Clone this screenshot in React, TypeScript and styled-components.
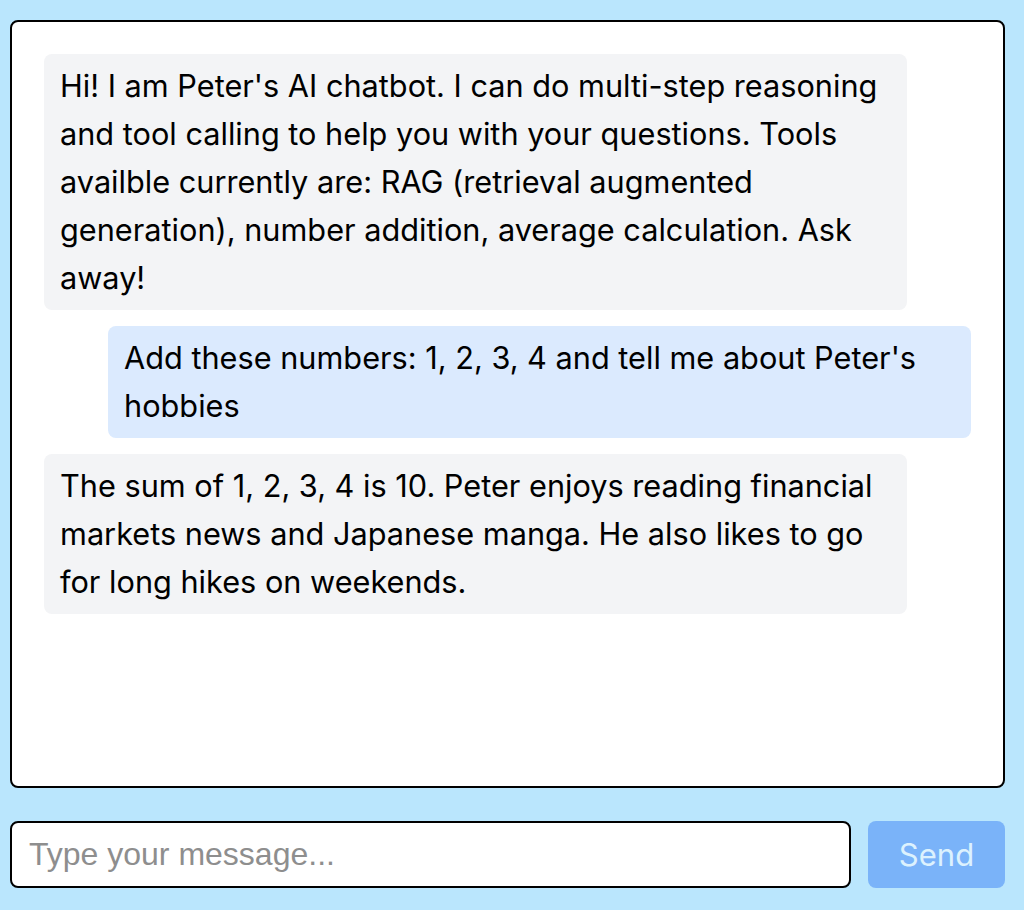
import React from "react";
import styled, { createGlobalStyle } from "styled-components";

const Global = createGlobalStyle`
  html, body { margin: 0; padding: 0; background: #bae6fd; }
  body { font-family: Inter, "Noto Sans", sans-serif; }
  * { box-sizing: border-box; }
`;

const Page = styled.div`
  display: flex;
  flex-direction: column;
  gap: 33px;
  padding: 20px 19px 22px 10px;
  height: 910px;
`;

const ChatBox = styled.div`
  flex: 1;
  background: #ffffff;
  border: 2px solid #000000;
  border-radius: 8px;
  padding: 32px;
  display: flex;
  flex-direction: column;
  gap: 16px;
  overflow: hidden;
`;

const Bubble = styled.div<{ $user?: boolean }>`
  max-width: calc(100% - 64px);
  align-self: ${(p) => (p.$user ? "flex-end" : "flex-start")};
  background: ${(p) => (p.$user ? "#dbeafe" : "#f3f4f6")};
  border-radius: 8px;
  padding: 8px 16px;
  font-size: 30.7px;
  line-height: 48px;
  color: #000;
`;

const InputRow = styled.div`
  display: flex;
  gap: 17px;
  height: 67px;
  flex-shrink: 0;
`;

const Input = styled.input`
  flex: 1;
  min-width: 0;
  border: 2px solid #000;
  border-radius: 8px;
  padding: 0 17px;
  font-family: "Liberation Sans", Arial, sans-serif;
  font-size: 32px;
  background: #fff;
  outline: none;
  &::placeholder { color: #8e8e8e; }
`;

const SendButton = styled.button`
  width: 137px;
  border: none;
  border-radius: 8px;
  background: #3b82f6;
  opacity: 0.5;
  color: #ffffff;
  font-family: Inter, "Noto Sans", sans-serif;
  font-size: 31px;
  cursor: not-allowed;
`;

const messages = [
  {
    user: false,
    text: "Hi! I am Peter's AI chatbot. I can do multi-step reasoning and tool calling to help you with your questions. Tools availble currently are: RAG (retrieval augmented generation), number addition, average calculation. Ask away!",
  },
  { user: true, text: "Add these numbers: 1, 2, 3, 4 and tell me about Peter's hobbies" },
  {
    user: false,
    text: "The sum of 1, 2, 3, 4 is 10. Peter enjoys reading financial markets news and Japanese manga. He also likes to go for long hikes on weekends.",
  },
];

export default function App() {
  return (
    <>
      <Global />
      <Page>
        <ChatBox>
          {messages.map((m, i) => (
            <Bubble key={i} $user={m.user}>
              {m.text}
            </Bubble>
          ))}
        </ChatBox>
        <InputRow>
          <Input placeholder="Type your message..." />
          <SendButton disabled>Send</SendButton>
        </InputRow>
      </Page>
    </>
  );
}
